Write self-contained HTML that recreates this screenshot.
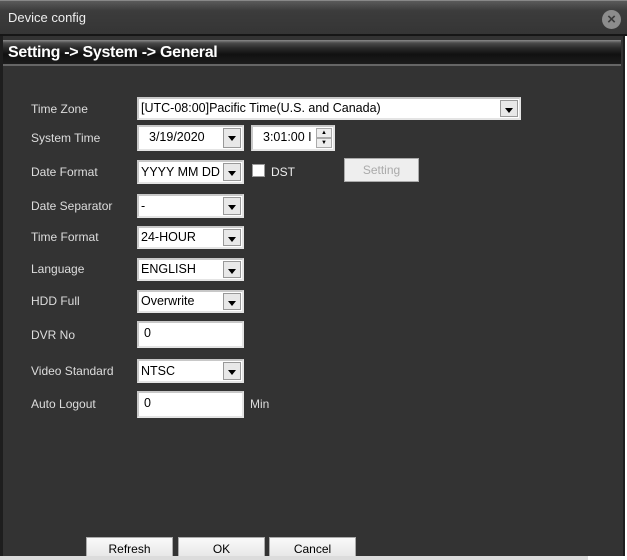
<!DOCTYPE html>
<html><head><meta charset="utf-8"><style>
*{box-sizing:border-box;margin:0;padding:0}
body{width:627px;height:560px;background:#fff;overflow:hidden;position:relative;font-family:"Liberation Sans",sans-serif;font-size:12px}
.win{position:absolute;left:0;top:0;width:625px;height:560px;background:#333;border-left:3px solid #1e1e1e;border-right:2px solid #1e1e1e}
.title{position:absolute;left:0;top:0;width:627px;height:36px;background:linear-gradient(#5a5a5a,#3c3c3c 30%,#353535);border-top:1px solid #888;border-bottom:2px solid #161616}
.title span{position:absolute;left:8px;top:9px;color:#eee;font-size:13px}
.close{position:absolute;left:602px;top:9px;width:19px;height:19px;border-radius:50%;background:#8c8c8c;color:#3a3a3a;font-size:15px;line-height:19px;text-align:center;font-weight:bold}
.hdr{position:absolute;left:3px;top:40px;width:618px;height:26px;background:linear-gradient(#8a8a8a 0,#4a4a4a 3px,#2a2a2a 8px,#111 60%,#1c1c1c);border-bottom:2px solid #666}
.hdr span{position:absolute;left:5px;top:4px;color:#fff;font-size:16px;font-weight:bold;letter-spacing:-0.3px}
.lbl{position:absolute;left:31px;color:#ddd;font-size:12px}
.f{position:absolute;background:#fff;border:2px solid #c8c8c8;border-right-color:#e4e4e4;border-bottom-color:#e4e4e4;color:#000;font-size:12.5px;padding-left:2px;line-height:18px;white-space:nowrap;overflow:hidden}
.dd{position:absolute;right:1px;top:1px;width:18px;bottom:1px;background:#e8e8e8;border:1px solid #999}
.dd:after{content:"";position:absolute;left:4px;top:7px;border-left:4.5px solid transparent;border-right:4.5px solid transparent;border-top:5px solid #000}
.btn{position:absolute;background:linear-gradient(#fafafa,#e6e6e6);border:1px solid #aaa;color:#000;text-align:center;font-size:12px}
</style></head><body>
<div class="win"></div>
<div class="title"><span>Device config</span><div class="close">×</div></div>
<div class="hdr"><span>Setting -&gt; System -&gt; General</span></div>

<div class="lbl" style="top:102px">Time Zone</div>
<div class="f" style="left:137px;top:97px;width:384px;height:23px">[UTC-08:00]Pacific Time(U.S. and Canada)<div class="dd"></div></div>

<div class="lbl" style="top:131px">System Time</div>
<div class="f" style="left:137px;top:125px;width:107px;height:26px;padding-left:10px;line-height:21px">3/19/2020<div class="dd"></div></div>
<div class="f" style="left:251px;top:125px;width:84px;height:26px;padding-left:10px;line-height:21px">3:01:00 I
 <div style="position:absolute;right:1px;top:1px;width:16px;height:10px;background:#eee;border:1px solid #aaa;font-size:6px;line-height:8px;text-align:center">▲</div>
 <div style="position:absolute;right:1px;top:11px;width:16px;height:10px;background:#eee;border:1px solid #aaa;font-size:6px;line-height:8px;text-align:center">▼</div></div>

<div class="lbl" style="top:165px">Date Format</div>
<div class="f" style="left:137px;top:160px;width:107px;height:24px;line-height:20px">YYYY MM DD<div class="dd"></div></div>
<div style="position:absolute;left:252px;top:164px;width:13px;height:13px;background:#fff;border:1px solid #999"></div>
<div style="position:absolute;left:271px;top:165px;color:#eee">DST</div>
<div class="btn" style="left:344px;top:158px;width:75px;height:24px;line-height:22px;color:#aaa;background:#eee">Setting</div>

<div class="lbl" style="top:199px">Date Separator</div>
<div class="f" style="left:137px;top:194px;width:107px;height:24px;line-height:20px">-<div class="dd"></div></div>

<div class="lbl" style="top:230px">Time Format</div>
<div class="f" style="left:137px;top:226px;width:107px;height:23px">24-HOUR<div class="dd"></div></div>

<div class="lbl" style="top:262px">Language</div>
<div class="f" style="left:137px;top:258px;width:107px;height:23px">ENGLISH<div class="dd"></div></div>

<div class="lbl" style="top:294px">HDD Full</div>
<div class="f" style="left:137px;top:290px;width:107px;height:23px">Overwrite<div class="dd"></div></div>

<div class="lbl" style="top:328px">DVR No</div>
<div class="f" style="left:137px;top:321px;width:107px;height:27px;padding-left:5px;line-height:21px">0</div>

<div class="lbl" style="top:364px">Video Standard</div>
<div class="f" style="left:137px;top:359px;width:107px;height:24px;line-height:20px">NTSC<div class="dd"></div></div>

<div class="lbl" style="top:397px">Auto Logout</div>
<div class="f" style="left:137px;top:391px;width:107px;height:27px;padding-left:5px;line-height:21px">0</div>
<div style="position:absolute;left:250px;top:397px;color:#ddd">Min</div>

<div class="btn" style="left:86px;top:537px;width:87px;height:22px;line-height:22px">Refresh</div>
<div class="btn" style="left:178px;top:537px;width:87px;height:22px;line-height:22px">OK</div>
<div class="btn" style="left:269px;top:537px;width:87px;height:22px;line-height:22px">Cancel</div>
<div style="position:absolute;left:0;top:556px;width:588px;height:4px;background:#dcdcdc"></div>
<div style="position:absolute;left:588px;top:556px;width:39px;height:4px;background:#fff"></div>
</body></html>
